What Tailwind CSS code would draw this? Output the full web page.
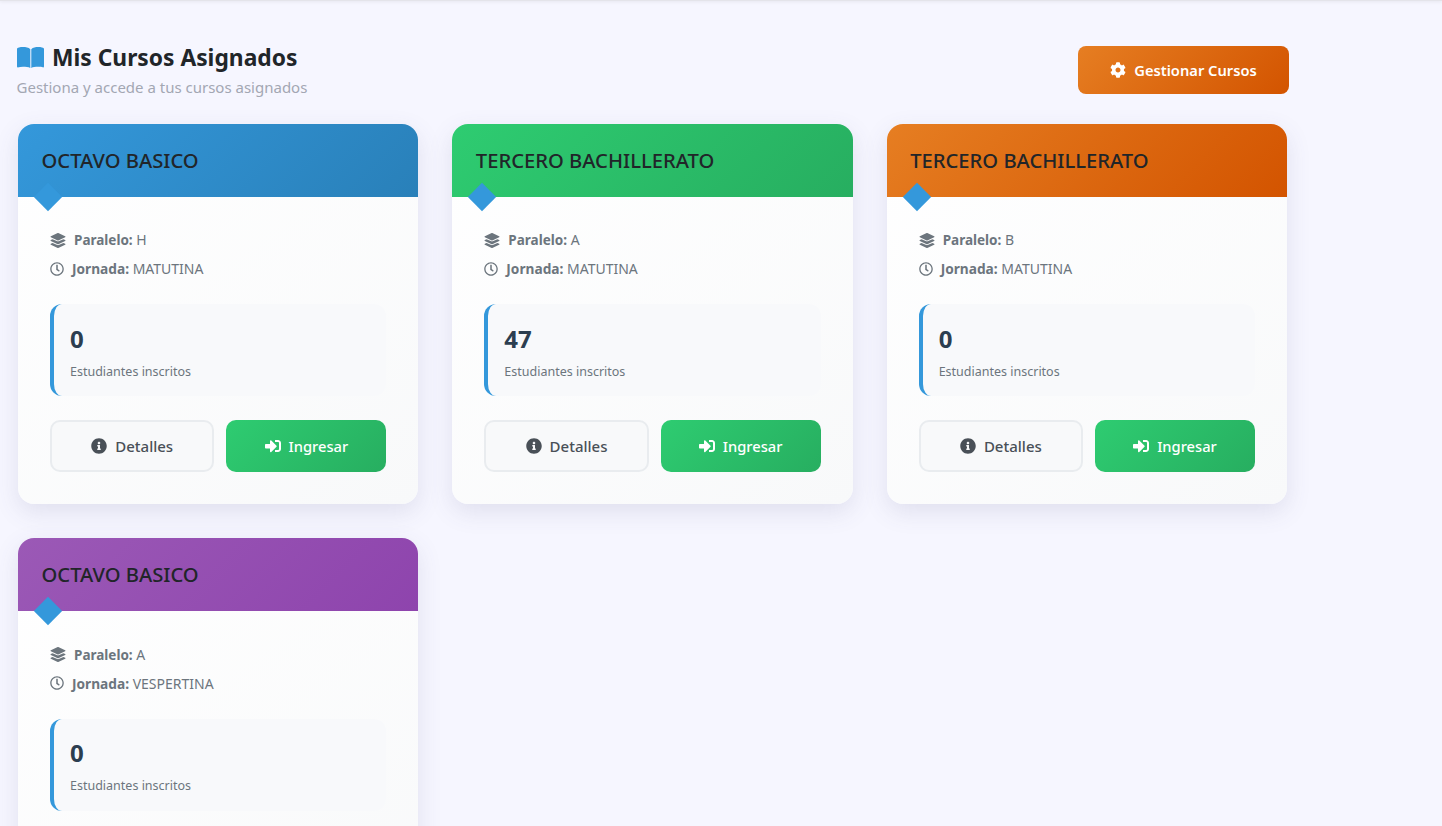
<!doctype html>
<html>
<head>
  <meta charset="UTF-8">
  <meta name="viewport" content="width=device-width, initial-scale=1.0">
  <script src="https://cdn.jsdelivr.net/npm/@tailwindcss/browser@4"></script>
</head>
<body class="bg-[#f6f6ff] font-['Noto_Sans','Open_Sans',sans-serif] h-screen overflow-hidden">
<div class="h-px bg-[#e4e4ea] shadow-[0_1px_3px_rgba(0,0,0,0.12)]"></div>
<div class="pl-[17px] w-[1289px] pt-[43px]">

  <!-- header -->
  <div class="flex justify-between items-start h-[80px]">
    <div>
      <h1 class="flex items-center text-[22.8px] leading-[28px] font-bold text-[#212529]">
        <svg class="w-[27px] h-[21px] mr-[8px] -mt-[2px] fill-[#3498db]" viewBox="0 0 27 21"><path d="M0 2C0 1 .8 .6 2 .4 6 -.2 11 0 13.3 2.2V21C10 19.6 4 19.6 .8 20.4.3 20.5 0 20.2 0 19.6ZM27 2C27 1 26.2 .6 25 .4 21 -.2 16.6 0 14.3 2.2V21C17 19.6 23 19.6 26.2 20.4 26.7 20.5 27 20.2 27 19.6Z"/></svg>
        Mis Cursos Asignados
      </h1>
      <p class="text-[15px] leading-[20px] mt-[5px] -ml-[0.5px] text-[#a3a7b3]">Gestiona y accede a tus cursos asignados</p>
    </div>
    <button class="flex items-center justify-center gap-[8px] w-[211px] h-[48px] mt-[2px] rounded-lg bg-linear-[135deg,#e67e22,#d35400] text-white text-[14.7px] font-semibold">
      <svg class="w-[16px] h-[16px] fill-white" viewBox="0 0 512 512"><path d="M487.4 315.7l-42.6-24.6c4.3-23.2 4.3-47 0-70.2l42.6-24.6c4.9-2.8 7.1-8.6 5.5-14-11.1-35.6-30-67.8-54.7-94.6-3.8-4.1-10-5.1-14.8-2.3L380.8 110c-17.9-15.4-38.5-27.3-60.8-35.1V25.8c0-5.6-3.9-10.5-9.4-11.7-36.7-8.2-74.3-7.8-109.2 0-5.5 1.2-9.4 6.1-9.4 11.7V75c-22.2 7.9-42.8 19.8-60.8 35.1L88.7 85.5c-4.9-2.8-11-1.9-14.8 2.3-24.7 26.7-43.6 58.9-54.7 94.6-1.7 5.4.6 11.2 5.5 14L67.3 221c-4.3 23.2-4.3 47 0 70.2l-42.6 24.6c-4.9 2.8-7.1 8.6-5.5 14 11.1 35.6 30 67.8 54.7 94.6 3.8 4.1 10 5.1 14.8 2.3l42.6-24.6c17.9 15.4 38.5 27.3 60.8 35.1v49.2c0 5.6 3.9 10.5 9.4 11.7 36.7 8.2 74.3 7.8 109.2 0 5.5-1.2 9.4-6.1 9.4-11.7v-49.2c22.2-7.9 42.8-19.8 60.8-35.1l42.6 24.6c4.9 2.8 11 1.9 14.8-2.3 24.7-26.7 43.6-58.9 54.7-94.6 1.5-5.5-.7-11.3-5.6-14.1zM256 336c-44.1 0-80-35.9-80-80s35.9-80 80-80 80 35.9 80 80-35.9 80-80 80z"/></svg>
      Gestionar Cursos
    </button>
  </div>

  <div id="cards" class="grid grid-cols-3 gap-[34px] ml-px w-[1269px]"></div>
</div>

<script>
let cursos=[
  {nombre:'OCTAVO BASICO',paralelo:'H',jornada:'MATUTINA',total:0,color:'bg-linear-[135deg,#3498db,#2980b9]'},
  {nombre:'TERCERO BACHILLERATO',paralelo:'A',jornada:'MATUTINA',total:47,color:'bg-linear-[135deg,#2ecc71,#27ae60]'},
  {nombre:'TERCERO BACHILLERATO',paralelo:'B',jornada:'MATUTINA',total:0,color:'bg-linear-[135deg,#e67e22,#d35400]'},
  {nombre:'OCTAVO BASICO',paralelo:'A',jornada:'VESPERTINA',total:0,color:'bg-linear-[135deg,#9b59b6,#8e44ad]'}
]
let cards=document.getElementById('cards')
cards.innerHTML=cursos.map((c)=>`
  <div class="h-[380.4px] rounded-[16px] bg-linear-[145deg,#ffffff,#f8f9fa] shadow-[0_8px_24px_rgba(80,80,120,0.13)]">
    <div class="relative h-[73px] rounded-t-[16px] pl-[23.5px] pt-[22px] ${c.color}">
      <h3 class="text-[20.2px] leading-[28px] font-medium text-[#212529]">${c.nombre}</h3>
      <div class="absolute left-[20px] bottom-[-10px] w-[20px] h-[20px] rotate-45 bg-[#3498db]"></div>
    </div>
    <div class="px-[32px] pt-[32px]">
      <div class="flex items-center h-[22px] text-[14px] text-[#6c757d]">
        <svg class="w-[16px] h-[15px] mr-[8px] fill-[#6c757d]" viewBox="0 0 512 512"><path d="M12.41 148.02l232.94 105.67c6.8 3.09 14.49 3.09 21.29 0l232.94-105.67c16.55-7.51 16.55-32.52 0-40.03L266.65 2.31a25.607 25.607 0 0 0-21.29 0L12.41 107.98c-16.55 7.51-16.55 32.53 0 40.04zm487.18 88.28l-58.09-26.33-161.64 73.27c-7.56 3.43-15.59 5.17-23.86 5.17s-16.29-1.74-23.86-5.17L70.51 209.97l-58.1 26.33c-16.55 7.5-16.55 32.5 0 40l232.94 105.59c6.8 3.08 14.49 3.08 21.29 0L499.59 276.3c16.55-7.5 16.55-32.5 0-40zm0 127.8l-57.87-26.23-161.86 73.37c-7.56 3.43-15.59 5.17-23.86 5.17s-16.29-1.74-23.86-5.17L70.29 337.87 12.41 364.1c-16.55 7.5-16.55 32.5 0 40l232.94 105.59c6.8 3.08 14.49 3.08 21.29 0L499.59 404.1c16.55-7.5 16.55-32.5 0-40z"/></svg>
        <span><b class="font-bold text-[13.5px]">Paralelo:</b> ${c.paralelo}</span>
      </div>
      <div class="flex items-center h-[22px] mt-[6.9px] text-[14px] text-[#6c757d]">
        <svg class="w-[14px] h-[14px] mr-[8px] fill-[#6c757d]" viewBox="0 0 512 512"><path d="M256 8C119 8 8 119 8 256s111 248 248 248 248-111 248-248S393 8 256 8zm0 448c-110.5 0-200-89.5-200-200S145.5 56 256 56s200 89.5 200 200-89.5 200-200 200zm61.8-104.4l-84.9-61.7c-3.1-2.3-4.9-5.9-4.9-9.7V116c0-6.6 5.4-12 12-12h32c6.6 0 12 5.4 12 12v141.7l66.8 48.6c5.4 3.9 6.5 11.4 2.6 16.8L334.6 349c-3.9 5.3-11.4 6.5-16.8 2.6z"/></svg>
        <span><b class="font-bold text-[13.7px]">Jornada:</b> ${c.jornada}</span>
      </div>
      <div class="h-[92px] mt-[24.5px] rounded-[12px] border-l-4 border-[#3498db] bg-[#f8f9fb] pl-[16px] pt-[18.5px]">
        <div class="text-[24px] leading-[32px] font-bold text-[#2c3e50]">${c.total}</div>
        <div class="text-[12.5px] leading-[18px] mt-[8px] text-[#6c757d]">Estudiantes inscritos</div>
      </div>
      <div class="grid grid-cols-[164.4px_159.9px] gap-[12px] mt-[24px]">
        <button class="flex items-center justify-center gap-[8px] h-[52px] rounded-[10px] border-2 border-[#e9ecef] bg-[#f8f9fa] text-[#495057] text-[15px] font-medium">
          <svg class="w-[16px] h-[16px] fill-[#495057]" viewBox="0 0 512 512"><path d="M256 8C119.043 8 8 119.083 8 256c0 136.997 111.043 248 248 248s248-111.003 248-248C504 119.083 392.957 8 256 8zm0 110c23.196 0 42 18.804 42 42s-18.804 42-42 42-42-18.804-42-42 18.804-42 42-42zm56 254c0 6.627-5.373 12-12 12h-88c-6.627 0-12-5.373-12-12v-24c0-6.627 5.373-12 12-12h12v-64h-12c-6.627 0-12-5.373-12-12v-24c0-6.627 5.373-12 12-12h64c6.627 0 12 5.373 12 12v100h12c6.627 0 12 5.373 12 12v24z"/></svg>
          Detalles
        </button>
        <button class="flex items-center justify-center gap-[8px] h-[52px] rounded-[10px] bg-linear-[135deg,#2ecc71,#27ae60] text-white text-[14.7px] font-medium">
          <svg class="w-[16px] h-[16px] fill-white" viewBox="0 0 512 512"><path d="M416 448h-84c-6.6 0-12-5.4-12-12v-40c0-6.6 5.4-12 12-12h84c17.7 0 32-14.3 32-32V160c0-17.7-14.3-32-32-32h-84c-6.6 0-12-5.4-12-12V76c0-6.6 5.4-12 12-12h84c53 0 96 43 96 96v192c0 53-43 96-96 96zm-47-201L201 79c-15-15-41-4.5-41 17v96H24c-13.3 0-24 10.7-24 24v96c0 13.3 10.7 24 24 24h136v96c0 21.5 26 32 41 17l168-168c9.3-9.4 9.3-24.6 0-34z"/></svg>
          Ingresar
        </button>
      </div>
    </div>
  </div>`).join('')
</script>
</body>
</html>
